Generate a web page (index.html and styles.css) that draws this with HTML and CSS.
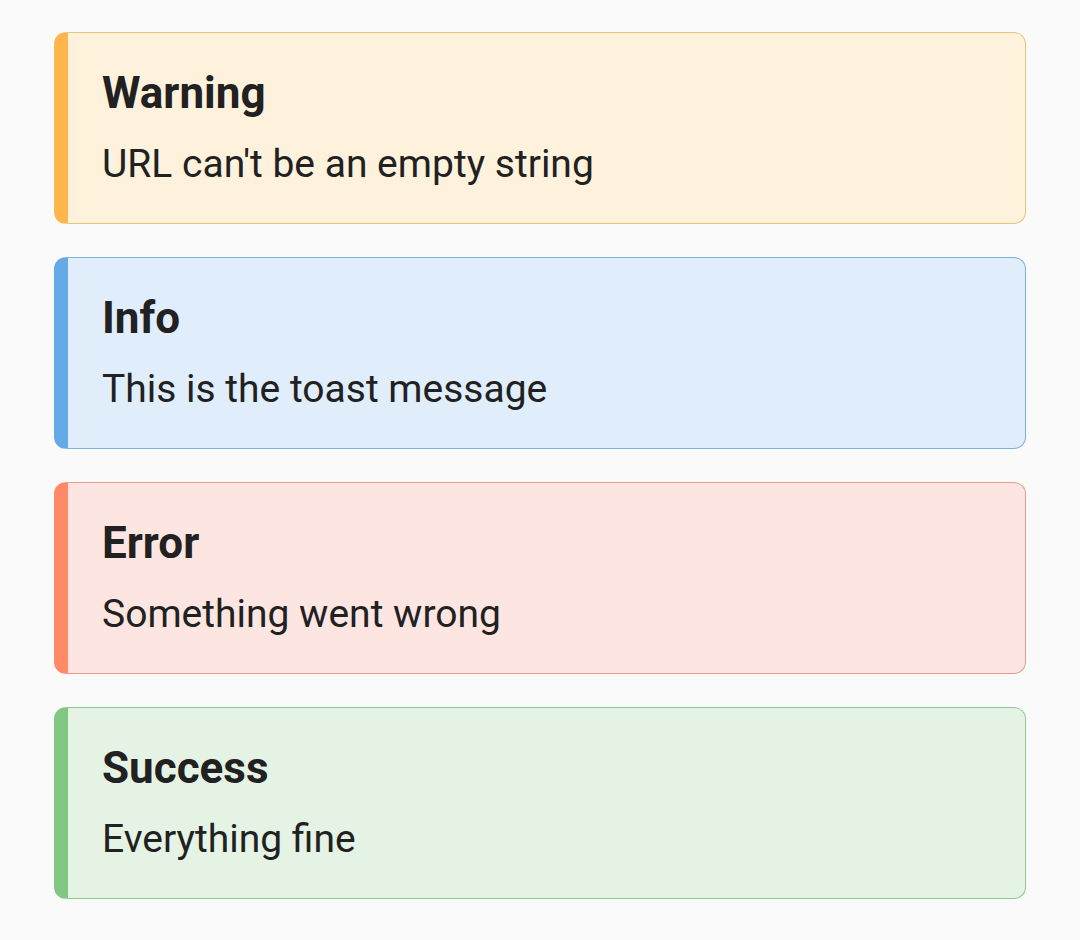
FILE: index.html
```html
<!DOCTYPE html>
<html>
<head>
<meta charset="utf-8">
<link rel="stylesheet" href="styles.css">
</head>
<body>
<div class="list">
  <div class="toast warning">
    <div class="title">Warning</div>
    <div class="msg">URL can't be an empty string</div>
  </div>
  <div class="toast info">
    <div class="title">Info</div>
    <div class="msg">This is the toast message</div>
  </div>
  <div class="toast error">
    <div class="title">Error</div>
    <div class="msg">Something went wrong</div>
  </div>
  <div class="toast success">
    <div class="title">Success</div>
    <div class="msg">Everything fine</div>
  </div>
</div>
</body>
</html>
```
FILE: styles.css
```css
html, body {
  margin: 0;
  padding: 0;
  background: #fafafa;
  font-family: Roboto, "Liberation Sans", sans-serif;
  color: #212121;
}
.list {
  display: flex;
  flex-direction: column;
  gap: 33px;
  padding: 32px 54px 0 54px;
  width: 972px;
}
.toast {
  box-sizing: border-box;
  height: 192px;
  border: 1px solid;
  border-left-width: 14px;
  border-radius: 12px;
  padding: 34px 0 0 34px;
}
.title {
  font-size: 44px;
  font-weight: 700;
  line-height: 52px;
}
.msg {
  font-size: 39px;
  line-height: 52px;
  margin-top: 19px;
}
.warning { background: #fff2dc; border-color: #e8c47c; border-left-color: #ffb74d; }
.info { background: #e0edfa; border-color: #7fb0d8; border-left-color: #64aae6; }
.error { background: #fde6e1; border-color: #e89c8c; border-left-color: #ff8a65; }
.success { background: #e5f3e5; border-color: #90c893; border-left-color: #81c784; }
```
